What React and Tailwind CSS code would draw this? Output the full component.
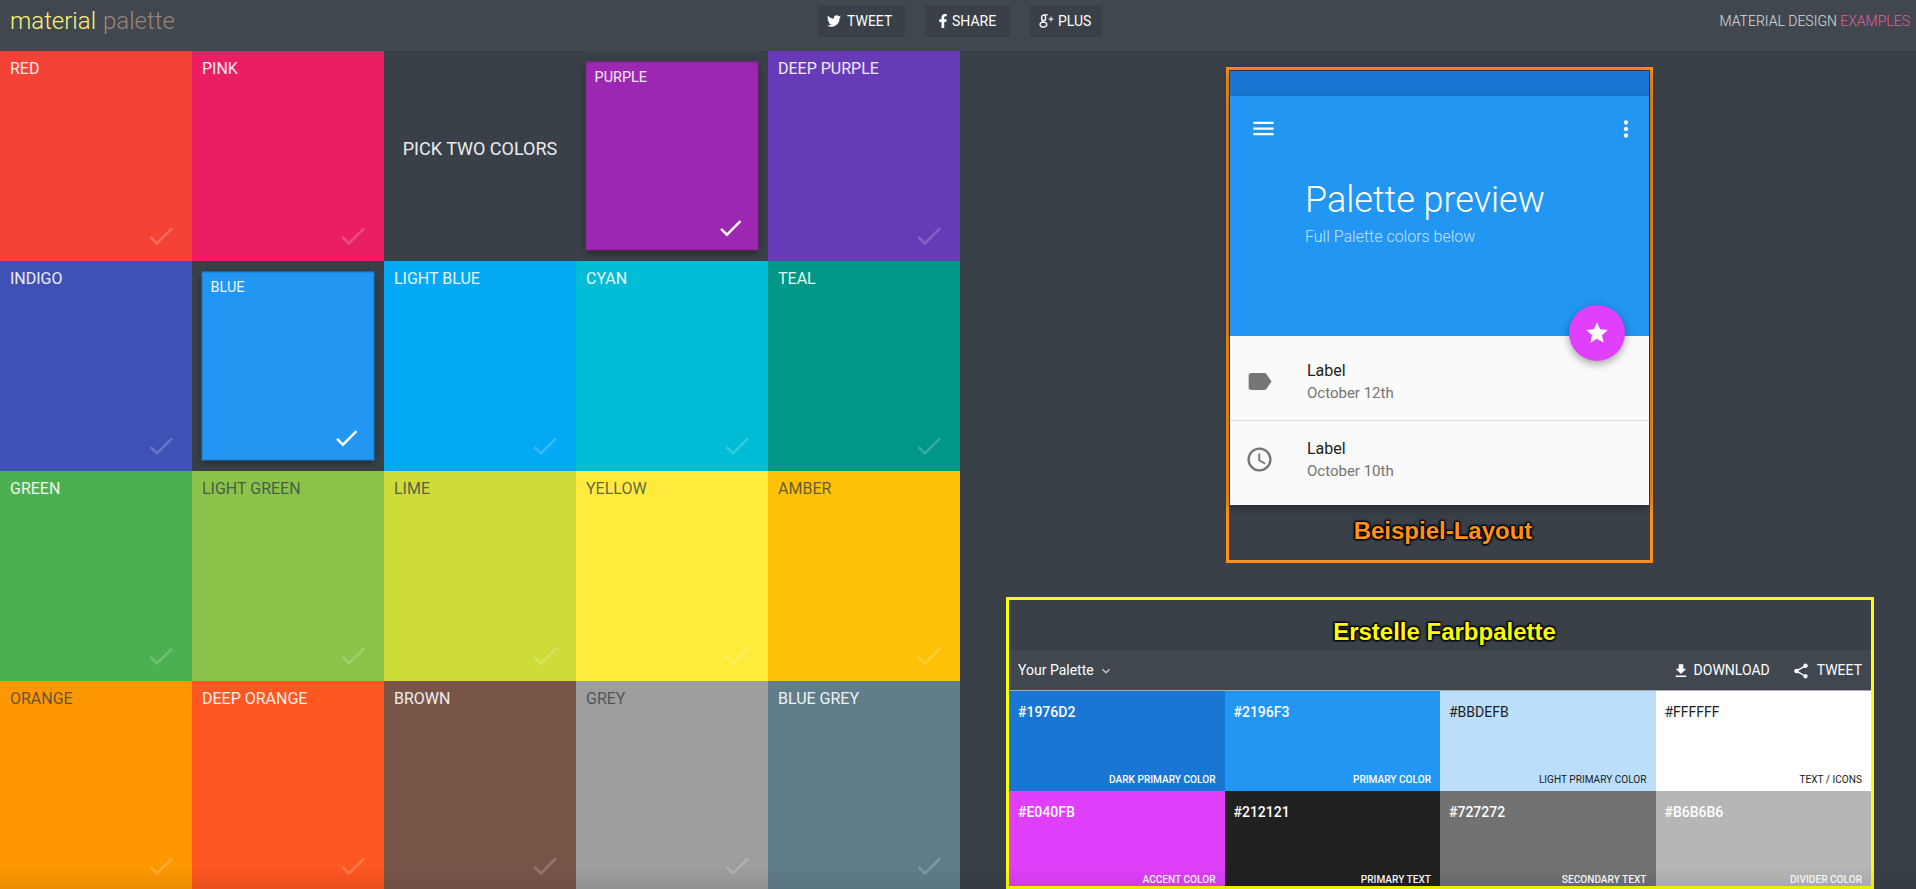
import React from "react";
import { FaTwitter, FaFacebookF } from "react-icons/fa";
import {
  MdCheck,
  MdMenu,
  MdMoreVert,
  MdStar,
  MdLabel,
  MdAccessTime,
  MdFileDownload,
  MdShare,
  MdKeyboardArrowDown,
} from "react-icons/md";

const tiles = [
  { name: "RED", bg: "bg-[#F44336]" },
  { name: "PINK", bg: "bg-[#E91E63]" },
  { pick: true },
  { name: "PURPLE", bg: "bg-[#9C27B0]", on: true },
  { name: "DEEP PURPLE", bg: "bg-[#673AB7]" },
  { name: "INDIGO", bg: "bg-[#3F51B5]" },
  { name: "BLUE", bg: "bg-[#2196F3]", on: true },
  { name: "LIGHT BLUE", bg: "bg-[#03A9F4]" },
  { name: "CYAN", bg: "bg-[#00BCD4]" },
  { name: "TEAL", bg: "bg-[#009688]" },
  { name: "GREEN", bg: "bg-[#4CAF50]" },
  { name: "LIGHT GREEN", bg: "bg-[#8BC34A]", dark: true },
  { name: "LIME", bg: "bg-[#CDDC39]", dark: true },
  { name: "YELLOW", bg: "bg-[#FFEB3B]", dark: true },
  { name: "AMBER", bg: "bg-[#FFC107]", dark: true },
  { name: "ORANGE", bg: "bg-[#FF9800]", dark: true },
  { name: "DEEP ORANGE", bg: "bg-[#FF5722]" },
  { name: "BROWN", bg: "bg-[#795548]" },
  { name: "GREY", bg: "bg-[#9E9E9E]", dark: true },
  { name: "BLUE GREY", bg: "bg-[#607D8B]" },
];

const swatches = [
  { hex: "#1976D2", label: "DARK PRIMARY COLOR", bg: "bg-[#1976D2]" },
  { hex: "#2196F3", label: "PRIMARY COLOR", bg: "bg-[#2196F3]" },
  { hex: "#BBDEFB", label: "LIGHT PRIMARY COLOR", bg: "bg-[#BBDEFB]", dark: true },
  { hex: "#FFFFFF", label: "TEXT / ICONS", bg: "bg-white", dark: true },
  { hex: "#E040FB", label: "ACCENT COLOR", bg: "bg-[#E040FB]" },
  { hex: "#212121", label: "PRIMARY TEXT", bg: "bg-[#212121]" },
  { hex: "#727272", label: "SECONDARY TEXT", bg: "bg-[#727272]" },
  { hex: "#B6B6B6", label: "DIVIDER COLOR", bg: "bg-[#B6B6B6]" },
];

const outline =
  "[text-shadow:0_0_2px_#000,1px_1px_2px_#000,-1px_-1px_2px_#000,1px_-1px_2px_#000,-1px_1px_2px_#000]";

// the old g+ mark, fa's one is too flat
const GPlus = () => (
  <svg width="15" height="14" viewBox="0 0 15 14" fill="none" stroke="currentColor">
    <ellipse cx="4.6" cy="3.9" rx="2" ry="2.8" strokeWidth="1.4" />
    <ellipse cx="4.4" cy="10.6" rx="3.4" ry="2.5" strokeWidth="1.3" />
    <path d="M3.5 6.8c-.6.7.2 1.1 1.6 1.5M4.5 .8h4.3" strokeWidth="1.2" />
    <path d="M12 2.6v5M9.5 5.1h5" strokeWidth="1" />
  </svg>
);

const Tile = ({ tile }) => {
  if (tile.pick) {
    return (
      <div className="flex items-center justify-center pb-[16px] text-[18px] text-white/90">
        PICK TWO COLORS
      </div>
    );
  }
  return (
    <div
      className={`flex flex-col justify-between pl-[10px] pr-[15px] pt-[8px] pb-[9px] ${tile.bg} ${
        tile.on ? "scale-[0.9] shadow-[inset_0_0_0_1px_rgba(0,0,0,0.2),0_3px_8px_rgba(0,0,0,0.4)]" : ""
      }`}
    >
      <span className={`text-[16px] leading-[20px] ${tile.dark ? "text-[#394047]/80" : "text-white/90"}`}>
        {tile.name}
      </span>
      <MdCheck size={32} className={`self-end ${tile.on ? "text-white" : "text-white/20"}`} />
    </div>
  );
};

const ListRow = ({ icon, date, className }) => (
  <div className={`flex items-center pl-[15px] ${className}`}>
    <div className="w-[62px] text-[#757575]">{icon}</div>
    <div className="flex flex-col">
      <span className="text-[16px] leading-[22px] text-[#212121]">Label</span>
      <span className="text-[15px] leading-[22px] text-[#757575]">{date}</span>
    </div>
  </div>
);

const App = () => {
  return (
    <div className="relative h-[889px] w-[1916px] overflow-hidden bg-[#394047] font-['Roboto',sans-serif]">
      <header className="flex h-[51px] items-start bg-[#40474f] pt-[5px]">
        <div className="flex h-[32px] w-[818px] items-center pl-[10px] text-[24px] font-light">
          <span className="text-[#fff27a]">material</span>
          <span className="ml-[7px] text-[#9a8479]">palette</span>
        </div>
        <div className="flex gap-[20px] text-[14px] text-white">
          <button className="flex h-[32px] w-[87px] items-center gap-[6px] bg-[#394047] pl-[9px]">
            <FaTwitter size={14} />
            TWEET
          </button>
          <button className="flex h-[32px] w-[85px] items-center gap-[2px] bg-[#394047] pl-[11px]">
            <FaFacebookF size={14} />
            SHARE
          </button>
          <button className="flex h-[32px] w-[72px] items-center gap-[4px] bg-[#394047] pl-[9px]">
            <GPlus />
            PLUS
          </button>
        </div>
        <div className="flex h-[32px] flex-1 items-center justify-end pr-[6px] text-[14px] font-light text-white/80">
          MATERIAL DESIGN&nbsp;<span className="text-[#e0609c]">EXAMPLES</span>
        </div>
      </header>

      <main className="flex">
        <div className="grid w-[960px] grid-cols-[repeat(5,192px)] auto-rows-[210px]">
          {tiles.map((t, i) => (
            <Tile key={i} tile={t} />
          ))}
        </div>

        <div className="flex flex-1 flex-col pt-[16px]">
          {/* Beispiel-Layout */}
          <div className="ml-[266px] h-[496px] w-[427px] border-[3px] border-[#ff8f1c] p-[1px]">
            <div className="relative shadow-[0_2px_10px_rgba(0,0,0,0.4)]">
              <div className="h-[25px] bg-[#1976D2]" />
              <div className="h-[240px] bg-[#2196F3] pt-[19px] text-white shadow-[0_1px_4px_rgba(0,0,0,0.25)]">
                <div className="flex items-center justify-between pl-[20px] pr-[10px]">
                  <MdMenu size={27} />
                  <MdMoreVert size={26} />
                </div>
                <div className="ml-[75px] mt-[36px] text-[36px] font-light leading-[44px]">Palette preview</div>
                <div className="ml-[75px] mt-[5px] text-[16px] font-light leading-[20px] text-white/75">
                  Full Palette colors below
                </div>
              </div>
              <div className="bg-[#fafafa]">
                <ListRow
                  icon={<MdLabel size={29} />}
                  date="October 12th"
                  className="h-[85px] border-b border-[#dcdcdc] pt-[7px]"
                />
                <ListRow icon={<MdAccessTime size={29} />} date="October 10th" className="h-[84px] pb-[7px]" />
              </div>
              <div className="absolute left-[339px] top-[234px] flex h-[56px] w-[56px] items-center justify-center rounded-full bg-[#E040FB] text-white shadow-[0_3px_8px_rgba(0,0,0,0.35)]">
                <MdStar size={26} />
              </div>
            </div>
            <div
              className={`mt-[10px] pl-[7px] text-center font-['Liberation_Sans',sans-serif] text-[24px] font-bold leading-[32px] text-[#ff9214] ${outline}`}
            >
              Beispiel-Layout
            </div>
          </div>

          {/* Erstelle Farbpalette */}
          <div className="ml-[46px] mt-[34px] h-[292px] w-[868px] overflow-hidden border-[3px] border-[#ffff00]">
            <div
              className={`flex h-[50px] items-center justify-center pl-[9px] pt-[14px] font-['Liberation_Sans',sans-serif] text-[24px] font-bold text-[#ffff00] ${outline}`}
            >
              Erstelle Farbpalette
            </div>
            <div className="flex h-[41px] items-center border-b border-[#a9adb0] bg-[#40474f] px-[9px] pt-[1px] text-[14px] text-white">
              <span>Your Palette</span>
              <MdKeyboardArrowDown size={16} className="ml-[4px] mt-[1px] text-white/70" />
              <MdFileDownload size={18} className="ml-auto" />
              <span className="ml-[4px]">DOWNLOAD</span>
              <MdShare size={18} className="ml-[22px]" />
              <span className="ml-[7px]">TWEET</span>
            </div>
            <div className="grid grid-cols-4 auto-rows-[100px]">
              {swatches.map((s) => (
                <div
                  key={s.hex}
                  className={`flex flex-col justify-between px-[9px] pb-[3px] pt-[11px] ${s.bg} ${
                    s.dark ? "font-normal text-[#212121]" : "font-medium text-white"
                  }`}
                >
                  <span className="text-[14px] leading-[20px]">{s.hex}</span>
                  <span className="self-end text-[10.1px] leading-[16px]">{s.label}</span>
                </div>
              ))}
            </div>
          </div>
        </div>
      </main>

      <div className="pointer-events-none absolute inset-x-0 bottom-0 h-[24px] bg-linear-to-t from-black/[0.08] to-transparent" />
    </div>
  );
};

export default App;
